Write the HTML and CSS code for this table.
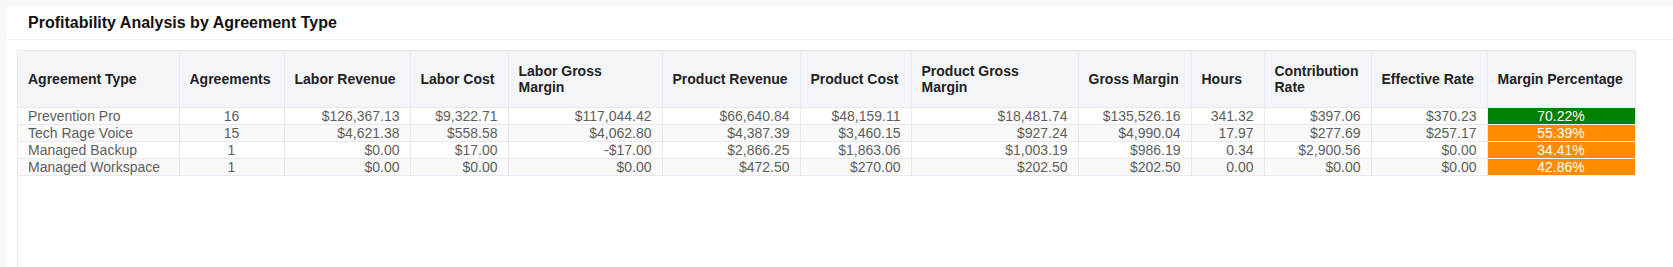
FILE: index.html
```html
<!DOCTYPE html>
<html lang="en">

<head>
    <meta charset="UTF-8">
    <meta name="viewport" content="width=device-width, initial-scale=1.0">
    <title>Profitability Analysis</title>
    <link rel="stylesheet" href="styles.css">
</head>

<body>
    <div class="card">
        <div class="card-header">Profitability Analysis by Agreement Type</div>

        <div class="card-body">
            <div class="table-wrap">
                <table class="report">
                    <colgroup>
                        <col><col><col><col><col><col><col><col><col><col><col><col><col>
                    </colgroup>
                    <thead>
                        <tr>
                            <th>Agreement Type</th>
                            <th>Agreements</th>
                            <th>Labor Revenue</th>
                            <th>Labor Cost</th>
                            <th>Labor Gross<br>Margin</th>
                            <th>Product Revenue</th>
                            <th>Product Cost</th>
                            <th>Product Gross<br>Margin</th>
                            <th>Gross Margin</th>
                            <th>Hours</th>
                            <th>Contribution<br>Rate</th>
                            <th>Effective Rate</th>
                            <th>Margin Percentage</th>
                        </tr>
                    </thead>
                    <tbody>
                        <tr>
                            <td>Prevention Pro</td>
                            <td class="center">16</td>
                            <td class="num">$126,367.13</td>
                            <td class="num">$9,322.71</td>
                            <td class="num">$117,044.42</td>
                            <td class="num">$66,640.84</td>
                            <td class="num">$48,159.11</td>
                            <td class="num">$18,481.74</td>
                            <td class="num">$135,526.16</td>
                            <td class="num">341.32</td>
                            <td class="num">$397.06</td>
                            <td class="num">$370.23</td>
                            <td class="pct good">70.22%</td>
                        </tr>
                        <tr>
                            <td>Tech Rage Voice</td>
                            <td class="center">15</td>
                            <td class="num">$4,621.38</td>
                            <td class="num">$558.58</td>
                            <td class="num">$4,062.80</td>
                            <td class="num">$4,387.39</td>
                            <td class="num">$3,460.15</td>
                            <td class="num">$927.24</td>
                            <td class="num">$4,990.04</td>
                            <td class="num">17.97</td>
                            <td class="num">$277.69</td>
                            <td class="num">$257.17</td>
                            <td class="pct warn">55.39%</td>
                        </tr>
                        <tr>
                            <td>Managed Backup</td>
                            <td class="center">1</td>
                            <td class="num">$0.00</td>
                            <td class="num">$17.00</td>
                            <td class="num">-$17.00</td>
                            <td class="num">$2,866.25</td>
                            <td class="num">$1,863.06</td>
                            <td class="num">$1,003.19</td>
                            <td class="num">$986.19</td>
                            <td class="num">0.34</td>
                            <td class="num">$2,900.56</td>
                            <td class="num">$0.00</td>
                            <td class="pct warn">34.41%</td>
                        </tr>
                        <tr>
                            <td>Managed Workspace</td>
                            <td class="center">1</td>
                            <td class="num">$0.00</td>
                            <td class="num">$0.00</td>
                            <td class="num">$0.00</td>
                            <td class="num">$472.50</td>
                            <td class="num">$270.00</td>
                            <td class="num">$202.50</td>
                            <td class="num">$202.50</td>
                            <td class="num">0.00</td>
                            <td class="num">$0.00</td>
                            <td class="num">$0.00</td>
                            <td class="pct warn">42.86%</td>
                        </tr>
                    </tbody>
                </table>
            </div>
        </div>
    </div>
</body>

</html>
```

FILE: styles.css
```css
* {
    box-sizing: border-box;
}

body {
    margin: 0px;
    padding: 6px 0px 0px 7px;
    min-height: 100vh;
    display: flex;
    background-color: #f7f7f7;
    font-family: "Liberation Sans", Arial, sans-serif;
}

.card {
    flex: 1;
    display: flex;
    flex-direction: column;
    background-color: white;
    border-top-left-radius: 4px;
}

.card-header {
    height: 34px;
    padding-left: 21px;
    display: flex;
    align-items: center;
    border-bottom: 1px solid #eeeeee;
    font-size: 16px;
    font-weight: 700;
    color: #111111;
}

.card-body {
    flex: 1;
    display: flex;
    padding: 10px 0px 0px 10px;
}

.table-wrap {
    flex: 1;
    border-left: 1px solid #e6e9ef;
}

.report {
    border-collapse: collapse;
    table-layout: fixed;
    width: 1617px;
    font-size: 14px;
    line-height: 16px;
}

.report col:nth-child(1) { width: 161px; }
.report col:nth-child(2) { width: 105px; }
.report col:nth-child(3) { width: 126px; }
.report col:nth-child(4) { width: 98px; }
.report col:nth-child(5) { width: 154px; }
.report col:nth-child(6) { width: 138px; }
.report col:nth-child(7) { width: 111px; }
.report col:nth-child(8) { width: 167px; }
.report col:nth-child(9) { width: 113px; }
.report col:nth-child(10) { width: 73px; }
.report col:nth-child(11) { width: 107px; }
.report col:nth-child(12) { width: 116px; }
.report col:nth-child(13) { width: 148px; }

.report th,
.report td {
    border: 1px solid #e6e9ef;
    padding: 0px 10px;
    white-space: nowrap;
}

.report th:first-child,
.report td:first-child {
    border-left: none;
}

.report th {
    height: 57px;
    text-align: left;
    vertical-align: middle;
    font-weight: 700;
    color: #222222;
    background-color: #f4f5f9;
}

.report td {
    height: 17px;
    color: #5e5e5e;
}

.report tbody tr:nth-child(even) td {
    background-color: #f9f9f9;
}

.report td.num {
    text-align: right;
}

.report td.center {
    text-align: center;
}

.report td.pct {
    text-align: center;
    color: white;
    border-color: #f0f0f0;
}

.report tbody tr td.good {
    background-color: #008000;
}

.report tbody tr td.warn {
    background-color: #ff8c00;
}
```
